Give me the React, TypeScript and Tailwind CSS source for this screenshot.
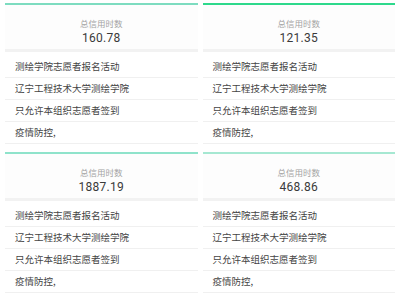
import React from "react";

type Panel = { value: string; bar: string };

const panels: Panel[] = [
  { value: "160.78", bar: "bg-[#7ddcc0]" },
  { value: "121.35", bar: "bg-[#2ed98c]" },
  { value: "1887.19", bar: "bg-[#8fe3cb]" },
  { value: "468.86", bar: "bg-[#a6e8d2]" },
];

const rows = [
  "测绘学院志愿者报名活动",
  "辽宁工程技术大学测绘学院",
  "只允许本组织志愿者签到",
  "疫情防控,",
];

function Card({ p }: { p: Panel }) {
  return (
    <div className="flex flex-col bg-white">
      <div className={`h-[2px] ${p.bar}`} />
      <div className="h-[44px] flex flex-col items-center bg-[#fdfdfd]">
        <div className="mt-[12px] text-[8.5px] leading-[12px] text-[#a3a3a3] font-['Noto_Sans_CJK_SC',sans-serif]">
          总信用时数
        </div>
        <div className="mt-[2px] text-[12px] leading-[14px] text-[#3a3a3a] tracking-[0.3px] font-['Roboto','Liberation_Sans',sans-serif]">
          {p.value}
        </div>
      </div>
      <div className="h-[3px] bg-[#f2f2f2]" />
      <div className="h-[4px]" />
      <div className="flex flex-col">
        {rows.map((r) => (
          <div
            key={r}
            className="h-[22px] flex items-center pl-[10px] border-b border-[#f0f0f0] text-[9.5px] text-[#444] font-['Noto_Sans_CJK_SC',sans-serif]"
          >
            {r}
          </div>
        ))}
      </div>
    </div>
  );
}

export default function App() {
  return (
    <div className="w-[400px] h-[300px] bg-white overflow-hidden px-[5px] pt-[3px] grid grid-cols-2 grid-rows-[149px_149px] gap-x-[5px]">
      {panels.map((p) => (
        <Card key={p.value} p={p} />
      ))}
    </div>
  );
}
